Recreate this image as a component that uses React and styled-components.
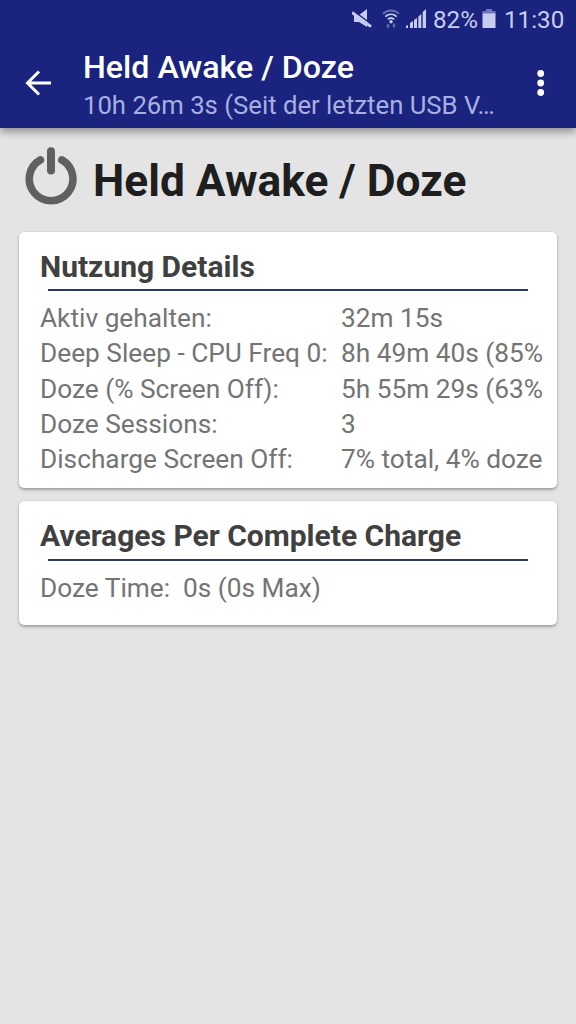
import React from "react";
import styled, { createGlobalStyle } from "styled-components";

const GlobalStyle = createGlobalStyle`
    * {
        box-sizing: border-box;
    }
    body {
        margin: 0;
        background-color: #e4e4e4;
        font-family: Roboto, "Liberation Sans", sans-serif;
    }
`;

const Screen = styled.div`
    width: 576px;
    height: 1024px;
    display: flex;
    flex-direction: column;
    overflow: hidden;
    background-color: #e4e4e4;
`;

const Header = styled.header`
    height: 128px;
    flex-shrink: 0;
    background-color: #1a237e;
    box-shadow: 0 4px 8px rgba(0, 0, 0, 0.36);
`;

const StatusBar = styled.div`
    height: 38px;
    padding-right: 12px;
    display: flex;
    align-items: center;
    justify-content: flex-end;
    color: #c8cdf0;
    line-height: 38px;
`;

const StatusIcon = styled.svg`
    display: block;
    flex-shrink: 0;
    margin-right: ${({ $gap }) => $gap}px;
`;

const StatusText = styled.span`
    width: ${({ $width }) => $width}px;
    padding-top: 1px;
    font-size: 24.2px;
    white-space: nowrap;
`;

const Toolbar = styled.div`
    height: 90px;
    display: flex;
    align-items: center;
    padding: 0 16px 0 19px;
`;

const IconButton = styled.button`
    width: 38px;
    height: 38px;
    padding: 0;
    border: none;
    background: none;
    color: #ffffff;
    cursor: pointer;
`;

const Titles = styled.div`
    flex: 1;
    min-width: 0;
    margin-left: 26px;
    padding-top: 5px;
`;

const Title = styled.div`
    color: #ffffff;
    font-size: 32.2px;
    font-weight: 500;
    line-height: 40px;
    white-space: nowrap;
`;

const Subtitle = styled.div`
    color: #a9afe0;
    font-size: 25.7px;
    line-height: 37px;
    white-space: nowrap;
`;

const Content = styled.main`
    flex: 1;
    display: flex;
    flex-direction: column;
    gap: 13px;
    padding: 0 19px;
`;

const PageTitle = styled.div`
    height: 91px;
    display: flex;
    align-items: center;
    gap: 16px;
    padding: 2px 0 0 6px;
`;

const PageHeading = styled.h1`
    margin: 0;
    padding-top: 13px;
    color: #1e1e1e;
    font-size: 44.3px;
    font-weight: 700;
    line-height: 52px;
    white-space: nowrap;
`;

const Card = styled.section`
    height: ${({ $height }) => $height}px;
    padding: 15px 14px 0 21px;
    border-radius: 5px;
    background-color: #ffffff;
    box-shadow: 0 2px 3px rgba(0, 0, 0, 0.28), 0 0 2px rgba(0, 0, 0, 0.12);
`;

const CardTitle = styled.h2`
    margin: 0;
    color: #404040;
    font-size: 30px;
    font-weight: 700;
    line-height: 40px;
    white-space: nowrap;
`;

const Divider = styled.div`
    height: 2px;
    margin: ${({ $top }) => $top}px 15px 10px 8px;
    background-color: #2f3860;
`;

const Row = styled.div`
    display: grid;
    grid-template-columns: ${({ $label }) => $label}px 1fr;
    color: #747474;
    font-size: 26.25px;
    line-height: 35.3px;
    white-space: nowrap;
`;

const Value = styled.span`
    min-width: 0;
    overflow: hidden;
`;

const details = [
    ["Aktiv gehalten:", "32m 15s"],
    ["Deep Sleep - CPU Freq 0:", "8h 49m 40s (85%)"],
    ["Doze (% Screen Off):", "5h 55m 29s (63%)"],
    ["Doze Sessions:", "3"],
    ["Discharge Screen Off:", "7% total, 4% doze"],
];

const MuteIcon = () => (
    <StatusIcon $gap={10} width="20" height="20" viewBox="0 0 20 20">
        <path d="M2 6h5l8-6v18l-8-5H2z" fill="currentColor" />
        <path d="M0 .8 20 15.600" stroke="#1a237e" strokeWidth="1.500" />
        <path d="M0 3.400 19 17.600" stroke="currentColor" strokeWidth="3" />
    </StatusIcon>
);

const WifiIcon = () => (
    <StatusIcon $gap={6} width="18" height="20" viewBox="0 0 18 20">
        <g fill="none" stroke="currentColor" strokeWidth="1.8">
            <path d="M1 4.8C5.5.4 12.5.4 17 4.8" opacity="0.45" />
            <path d="M3.3 7.6c3.4-3 8-3 11.4 0" />
            <path d="M5.8 10.4c2-1.7 4.4-1.7 6.4 0" />
        </g>
        <circle cx="9" cy="12.7" r="1.7" fill="currentColor" />
        <path d="M6 14.5l2 2.5H7v2H5v-2H4zM12 19l2-2.5h-1v-2h-2v2h-1z" fill="currentColor" opacity="0.4" />
    </StatusIcon>
);

const SignalIcon = () => (
    <StatusIcon $gap={7} width="20" height="20" viewBox="0 0 20 20" fill="currentColor">
        <path d="M0 19v-2l2-1v3zM4 19v-5l3-2v7zM8 19v-8l3-2v10zM12.300 19V7.500L15.300 5v14zM16.700 19V3l3.300-3v19z" />
    </StatusIcon>
);

const BatteryIcon = () => (
    <StatusIcon $gap={8} width="14" height="20" viewBox="0 0 14 20">
        <path d="M4 0h6v2h3.500v3H.5V2H4z" fill="currentColor" opacity="0.5" />
        <path d="M.5 4.500h13V19H.5z" fill="currentColor" />
    </StatusIcon>
);

const PowerIcon = () => (
    <svg width="52" height="60" viewBox="0 0 52 60" fill="none" stroke="#606060" strokeLinecap="round">
        <path d="M15.400 14.900A21.800 21.800 0 1 0 36.800 14.900" strokeWidth="7.600" />
        <path d="M26 6.300v19.300" strokeWidth="8" />
    </svg>
);

const App = () => {
    return (
        <>
            <GlobalStyle />
            <Screen>
                <Header>
                    <StatusBar>
                        <MuteIcon />
                        <WifiIcon />
                        <SignalIcon />
                        <StatusText $width={49}>82%</StatusText>
                        <BatteryIcon />
                        <StatusText $width={60}>11:30</StatusText>
                    </StatusBar>
                    <Toolbar>
                        <IconButton aria-label="Back">
                            <svg width="38" height="38" viewBox="0 0 38 38" fill="none" stroke="currentColor" strokeWidth="3">
                                <path d="M32 19H9M20 7.500 8.500 19 20 30.500" />
                            </svg>
                        </IconButton>
                        <Titles>
                            <Title>Held Awake / Doze</Title>
                            <Subtitle>10h 26m 3s (Seit der letzten USB V…</Subtitle>
                        </Titles>
                        <IconButton aria-label="More options">
                            <svg width="38" height="38" viewBox="0 0 38 38" fill="currentColor">
                                <circle cx="18.700" cy="9.500" r="3.400" />
                                <circle cx="18.700" cy="19" r="3.400" />
                                <circle cx="18.700" cy="28.500" r="3.400" />
                            </svg>
                        </IconButton>
                    </Toolbar>
                </Header>
                <Content>
                    <PageTitle>
                        <PowerIcon />
                        <PageHeading>Held Awake / Doze</PageHeading>
                    </PageTitle>
                    <Card $height={256}>
                        <CardTitle>Nutzung Details</CardTitle>
                        <Divider $top={2} />
                        {details.map(([label, value]) => (
                            <Row key={label} $label={301}>
                                <span>{label}</span>
                                <Value>{value}</Value>
                            </Row>
                        ))}
                    </Card>
                    <Card $height={124}>
                        <CardTitle>Averages Per Complete Charge</CardTitle>
                        <Divider $top={3} />
                        <Row $label={143}>
                            <span>Doze Time:</span>
                            <Value>0s (0s Max)</Value>
                        </Row>
                    </Card>
                </Content>
            </Screen>
        </>
    );
};

export default App;
